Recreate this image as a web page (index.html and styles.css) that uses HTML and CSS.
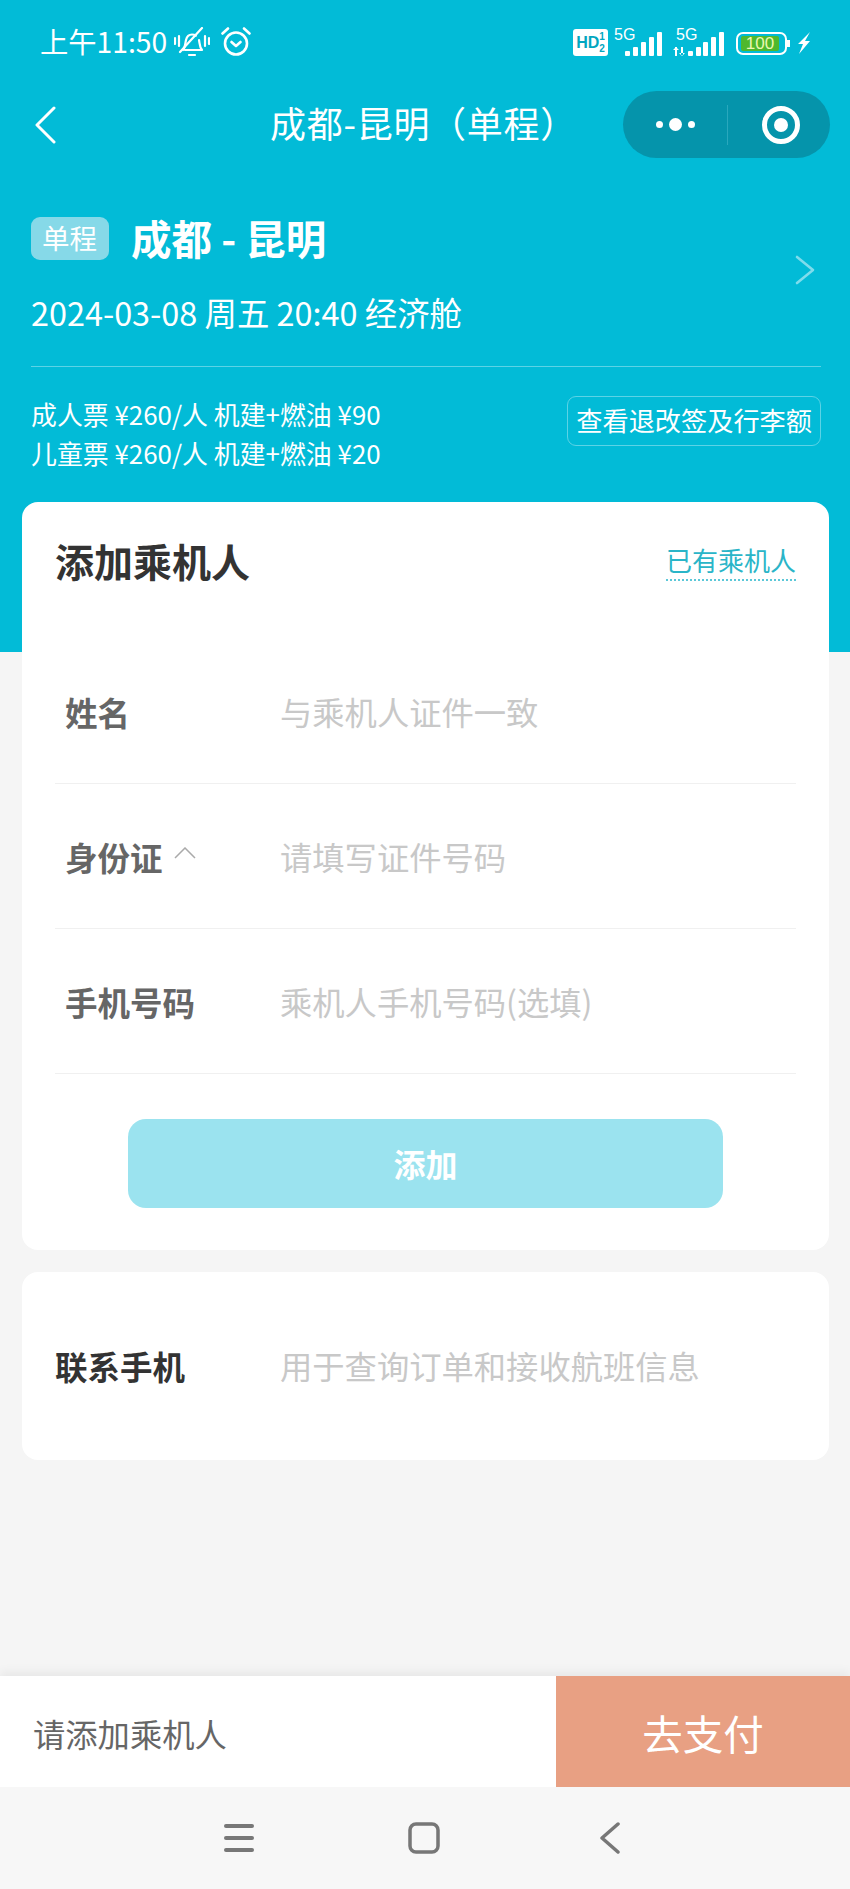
FILE: index.html
```html
<!DOCTYPE html>
<html lang="zh-CN">
<head>
  <meta charset="UTF-8">
  <meta name="viewport" content="width=device-width, initial-scale=1.0">
  <title>添加乘机人</title>
  <link rel="stylesheet" href="styles.css">
</head>
<body>
  <div class="page">
    <!-- Phone status bar -->
    <div class="status-bar">
      <div class="status-left">
        <span class="clock">上午11:50</span>
        <svg class="ic-bell" viewBox="0 0 36 30" width="36" height="30" fill="none" stroke="#fff" stroke-width="2.200" stroke-linecap="round" stroke-linejoin="round">
          <path d="M9 23c2.500-3 2-6 3-10 .8-3.500 3-5.500 6-5.500 1.500 0 2.800.4 3.800 1.200M25 13c.8 4 .5 7 3 10H11"/>
          <path d="M15 28h6M28 1 6 25M1 11v6M5 9v10M31 9v10M35 11v6"/>
        </svg>
        <svg class="ic-alarm" viewBox="0 0 30 30" width="30" height="30" fill="none" stroke="#fff" stroke-width="2.600" stroke-linecap="round" stroke-linejoin="round">
          <circle cx="15" cy="16.500" r="11"/>
          <path d="M1.500 6.500 7 1.500M28.500 6.500 23 1.500M10.500 15l4.500 4 4.500-4"/>
        </svg>
      </div>
      <div class="status-right">
        <span class="hd-badge">HD<span class="hd-nums">1<br>2</span></span>
        <div class="signal signal-one">
          <span class="net">5G</span>
          <svg viewBox="0 0 37 24" width="37" height="24" fill="#fff"><rect x="0" y="19" width="5" height="5" rx="1"/><rect x="8" y="15" width="5" height="9" rx="1"/><rect x="16" y="10" width="5" height="14" rx="1"/><rect x="24" y="5" width="5" height="19" rx="1"/><rect x="32" y="0" width="5" height="24" rx="1"/></svg>
        </div>
        <div class="signal signal-two">
          <span class="net net-two">5G</span>
          <svg viewBox="0 0 51 24" width="51" height="24" fill="#fff"><path d="M2 15h2v9H2zM0 18l3-3 3 3zM8 15h2v9H8zM6 21l3 3 3-3z"/><rect x="15" y="19" width="5" height="5" rx="1"/><rect x="23" y="15" width="5" height="9" rx="1"/><rect x="30" y="10" width="5" height="14" rx="1"/><rect x="38" y="5" width="5" height="19" rx="1"/><rect x="46" y="0" width="5" height="24" rx="1"/></svg>
        </div>
        <div class="battery"><span class="battery-fill">100</span></div>
        <span class="battery-tip"></span>
        <svg class="ic-bolt" viewBox="0 0 14 24" width="14" height="24" fill="#fff"><path d="M13 1 1 13h5L2 23l11-13H8z"/></svg>
      </div>
    </div>

    <!-- Mini program nav -->
    <div class="nav-bar">
      <svg class="nav-back" viewBox="0 0 24 38" width="24" height="38" fill="none" stroke="#fff" stroke-width="3" stroke-linecap="round" stroke-linejoin="round"><path d="M20 2 3 19l17 17"/></svg>
      <div class="nav-title">成都-昆明（单程）</div>
      <div class="capsule">
        <div class="capsule-dots"><i></i><i class="big"></i><i></i></div>
        <div class="capsule-line"></div>
        <div class="capsule-target"><i></i></div>
      </div>
    </div>

    <!-- Flight summary -->
    <div class="flight">
      <div class="flight-top">
        <div>
          <div class="route">
            <span class="tag">单程</span>
            <span class="route-name">成都 - 昆明</span>
          </div>
          <div class="flight-date">2024-03-08 周五 20:40 经济舱</div>
        </div>
        <svg class="flight-arrow" viewBox="0 0 20 30" width="20" height="30" fill="none" stroke="#7fdcec" stroke-width="2.600" stroke-linecap="round" stroke-linejoin="round"><path d="M2 2 18 15 2 28"/></svg>
      </div>
      <div class="fares">
        <div class="fare-lines">
          <div>成人票 ¥260/人 机建+燃油 ¥90</div>
          <div>儿童票 ¥260/人 机建+燃油 ¥20</div>
        </div>
        <div class="rules-btn">查看退改签及行李额</div>
      </div>
    </div>

    <!-- Passenger form -->
    <div class="card passenger-card">
      <div class="card-head">
        <div class="card-title">添加乘机人</div>
        <div class="card-link">已有乘机人</div>
      </div>
      <div class="form-row">
        <div class="form-label">姓名</div>
        <div class="form-hint">与乘机人证件一致</div>
      </div>
      <div class="form-row">
        <div class="form-label">身份证
          <svg class="label-caret" viewBox="0 0 22 12" width="22" height="12" fill="none" stroke="#aaa" stroke-width="1.500"><path d="M1 11 11 1l10 10"/></svg>
        </div>
        <div class="form-hint">请填写证件号码</div>
      </div>
      <div class="form-row">
        <div class="form-label">手机号码</div>
        <div class="form-hint">乘机人手机号码(选填)</div>
      </div>
      <div class="add-btn">添加</div>
    </div>

    <div class="card contact-card">
      <div class="contact-label">联系手机</div>
      <div class="form-hint">用于查询订单和接收航班信息</div>
    </div>

    <!-- Pay bar -->
    <div class="pay-bar">
      <div class="pay-text">请添加乘机人</div>
      <div class="pay-btn">去支付</div>
    </div>

    <!-- Android nav -->
    <div class="sys-nav">
      <svg viewBox="0 0 30 30" width="30" height="30" fill="#777"><rect y="1" width="30" height="4" rx="2"/><rect y="13" width="30" height="4" rx="2"/><rect y="25" width="30" height="4" rx="2"/></svg>
      <svg viewBox="0 0 32 32" width="32" height="32" fill="none" stroke="#777" stroke-width="3.500"><rect x="2" y="2" width="28" height="28" rx="6"/></svg>
      <svg class="sys-back" viewBox="0 0 22 32" width="22" height="32" fill="none" stroke="#777" stroke-width="3.500" stroke-linecap="round" stroke-linejoin="round"><path d="M19 2 3 16l16 14"/></svg>
    </div>
  </div>
</body>
</html>
```

FILE: styles.css
```css
* {
  box-sizing: border-box;
}

body {
  margin: 0;
  font-family: "Noto Sans CJK SC", "Noto Sans", sans-serif;
}

.page {
  width: 850px;
  height: 1889px;
  display: flex;
  flex-direction: column;
  overflow: hidden;
  background: linear-gradient(#02bbd7 652px, #f5f5f5 652px);
}

/* Status bar */
.status-bar {
  height: 84px;
  padding: 0 39px 0 40px;
  display: flex;
  justify-content: space-between;
  align-items: center;
  color: #fff;
}

.status-left {
  display: flex;
  align-items: center;
  gap: 7px;
}

.clock {
  font-size: 28.300px;
  margin-top: -4px;
}

.ic-bell {
  margin-top: -1px;
}

.ic-alarm {
  margin-left: 4px;
}

.status-right {
  display: flex;
  align-items: flex-end;
  height: 28px;
}

.hd-badge {
  width: 35px;
  height: 27px;
  background: #fff;
  border-radius: 3px;
  color: #02a6c0;
  font: bold 16px/27px "Liberation Sans", sans-serif;
  display: flex;
  align-items: center;
  justify-content: center;
}

.hd-nums {
  font-size: 10px;
  line-height: 12px;
}

.signal {
  position: relative;
  display: flex;
  align-items: flex-end;
  height: 28px;
}

.signal-one {
  width: 48px;
  margin-left: 6px;
  justify-content: flex-end;
}

.signal-two {
  margin-left: 11px;
}

.net {
  position: absolute;
  left: 0;
  top: -2px;
  font: 16px/18px "Liberation Sans", sans-serif;
}

.net-two {
  left: 3px;
}

.battery {
  width: 51px;
  height: 23px;
  margin: 0 0 1px 12px;
  border: 2px solid #fff;
  border-radius: 7px;
  padding: 2px 3px;
}

.battery-fill {
  display: block;
  width: 38px;
  height: 15px;
  background: #4fb82d;
  border-radius: 2px;
  color: #ecf7b0;
  text-align: center;
  font: 17px/15px "Liberation Sans", sans-serif;
}

.battery-tip {
  width: 3px;
  height: 7px;
  background: #fff;
  margin: 0 0 9px 0;
}

.ic-bolt {
  margin: 0 0 1px 7px;
}

/* Nav */
.nav-bar {
  position: relative;
  height: 76px;
  display: flex;
  align-items: center;
  justify-content: center;
}

.nav-back {
  position: absolute;
  left: 34px;
  top: 22px;
}

.nav-title {
  font-size: 36px;
  letter-spacing: 0.700px;
  color: #fff;
  margin-left: -3px;
}

.capsule {
  position: absolute;
  right: 20px;
  top: 7px;
  width: 207px;
  height: 67px;
  border-radius: 34px;
  background: #0594ab;
  display: flex;
  align-items: center;
}

.capsule-dots {
  width: 104px;
  display: flex;
  justify-content: center;
  align-items: center;
  gap: 6px;
}

.capsule-dots i {
  width: 7px;
  height: 7px;
  border-radius: 50%;
  background: #fff;
}

.capsule-dots i.big {
  width: 13px;
  height: 13px;
}

.capsule-line {
  width: 1px;
  height: 40px;
  background: #2aa8bd;
}

.capsule-target {
  flex: 1;
  display: flex;
  justify-content: center;
  padding-left: 4px;
}

.capsule-target i {
  width: 38px;
  height: 38px;
  border: 5px solid #fff;
  border-radius: 50%;
  display: flex;
  align-items: center;
  justify-content: center;
}

.capsule-target i::after {
  content: "";
  width: 14px;
  height: 14px;
  border-radius: 50%;
  background: #fff;
}

/* Flight summary */
.flight {
  margin: 49px 29px 0 31px;
  color: #fff;
}

.flight-top {
  height: 158px;
  display: flex;
  justify-content: space-between;
  align-items: center;
  border-bottom: 1px solid #5cd3e6;
  padding: 0 6px 30px 0;
}

.flight-arrow {
  margin-bottom: 5px;
}

.route {
  display: flex;
  align-items: center;
  gap: 22px;
  height: 50px;
  margin-top: 2px;
}

.tag {
  width: 78px;
  height: 43px;
  margin-top: 2px;
  border-radius: 9px;
  background: #86d9e8;
  font-size: 27.500px;
  line-height: 41px;
  text-align: center;
  text-indent: -1px;
}

.route-name {
  font-size: 40.500px;
  font-weight: 700;
  line-height: 50px;
}

.flight-date {
  font-size: 32.400px;
  line-height: 46px;
  margin-top: 26px;
}

.fares {
  display: flex;
  justify-content: space-between;
  align-items: flex-start;
  margin-top: 28px;
}

.fare-lines {
  font-size: 25.900px;
  line-height: 38.500px;
}

.rules-btn {
  height: 50px;
  margin-top: 1px;
  padding: 0 8px;
  border: 1px solid #5cd3e6;
  border-radius: 9px;
  font-size: 26.200px;
  line-height: 46px;
}

/* Cards */
.card {
  background: #fff;
  border-radius: 16px;
  margin: 0 21px 0 22px;
}

.passenger-card {
  margin-top: 30px;
  height: 748px;
  padding: 0 33px;
}

.card-head {
  height: 110px;
  margin-bottom: 27px;
  padding-top: 6px;
  display: flex;
  justify-content: space-between;
  align-items: center;
}

.card-title {
  font-size: 39px;
  font-weight: 700;
  color: #333;
}

.card-link {
  font-size: 26px;
  color: #2ab5c8;
  line-height: 36px;
  margin-top: 3px;
  padding-bottom: 1px;
  border-bottom: 2px dotted #5cc8d8;
}

.form-row {
  height: 145px;
  display: flex;
  align-items: center;
  border-bottom: 1px solid #f0f0f0;
}

.form-label {
  width: 225px;
  padding-left: 10px;
  font-size: 32.500px;
  font-weight: 700;
  color: #666;
  display: flex;
  align-items: center;
  gap: 11px;
}

.label-caret {
  margin-top: -6px;
}

.form-hint {
  font-size: 32.300px;
  color: #c8c8c8;
}

.add-btn {
  width: 595px;
  height: 89px;
  margin: 45px auto 0;
  border-radius: 18px;
  background: #9be3ef;
  color: #fff;
  font-size: 32px;
  font-weight: 700;
  line-height: 89px;
  text-align: center;
}

.contact-card {
  margin-top: 22px;
  height: 188px;
  padding: 0 33px 2px;
  display: flex;
  align-items: center;
}

.contact-label {
  width: 225px;
  font-size: 32.500px;
  font-weight: 700;
  color: #333;
}

/* Bottom bars */
.pay-bar {
  margin-top: 216px;
  height: 111px;
  display: flex;
  background: #fff;
  box-shadow: 0 -4px 10px rgba(0, 0, 0, 0.06);
}

.pay-text {
  flex: 1;
  padding: 3px 0 0 33px;
  font-size: 32.300px;
  line-height: 109px;
  color: #666;
}

.pay-btn {
  width: 294px;
  padding-top: 2px;
  background: #e8a083;
  color: #fff;
  font-size: 40.500px;
  line-height: 109px;
  text-align: center;
}

.sys-nav {
  flex: 1;
  background: #f7f7f7;
  display: flex;
  align-items: center;
  gap: 154px;
  padding-left: 224px;
}

.sys-back {
  margin-left: 5px;
}
```
